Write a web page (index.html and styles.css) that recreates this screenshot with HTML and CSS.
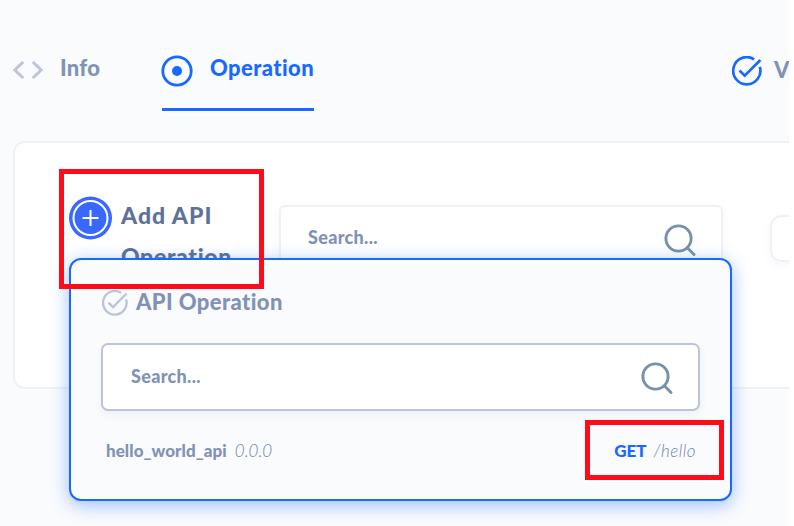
FILE: index.html
```html
<!DOCTYPE html>
<html lang="en">
<head>
<meta charset="utf-8">
<title>API Operation</title>
<link rel="stylesheet" href="styles.css">
</head>
<body>
<svg width="0" height="0" class="defs">
  <symbol id="search" viewBox="0 0 32 32"><circle cx="14.5" cy="14.5" r="12.6"/><path d="M23.5 24 30 30.5" stroke-linecap="round"/></symbol>
  <symbol id="check" viewBox="0 0 30 30"><path d="M22.1 3.3A13.6 13.6 0 1 0 27.8 10.8M7.5 14.5l5.2 5.2L28.4 4"/></symbol>
</svg>
<div class="app">
  <nav class="tabs">
    <a class="tab info"><svg class="code" viewBox="0 0 30 18"><path d="M10.200 1 1.800 9l8.400 8M19.800 1l8.400 8-8.400 8"/></svg><span class="t-info">Info</span></a>
    <a class="tab active"><svg class="target" viewBox="0 0 32 32"><circle cx="16" cy="16" r="14.2"/><circle class="dot" cx="16" cy="16" r="5"/></svg><span class="t-op">Operation</span></a>
    <a class="tab verify"><svg class="tick"><use href="#check"/></svg><span>V</span></a>
  </nav>
  <main class="card">
    <button class="add">
      <svg viewBox="0 0 44 44"><circle class="disc" cx="22.500" cy="22" r="21.500"/><circle class="ring" cx="22.500" cy="22" r="17"/><path d="M14.500 22h16M22.500 14v16"/></svg>
      <span><span class="t-add">Add API</span><br><span class="t-add2">Operation</span></span>
    </button>
    <div class="search outer"><span class="t-search">Search...</span><svg><use href="#search"/></svg></div>
    <div class="select"></div>
  </main>
  <section class="popover">
    <h2><svg><use href="#check"/></svg><span class="t-title">API Operation</span></h2>
    <div class="search inner"><span class="t-search">Search...</span><svg><use href="#search"/></svg></div>
    <div class="row"><b class="t-name">hello_world_api</b><i class="t-ver">0.0.0</i><b class="t-get">GET</b><i class="t-path">/hello</i></div>
  </section>
  <div class="mark mark-add"></div>
  <div class="mark mark-path"></div>
</div>
</body>
</html>
```
FILE: styles.css
```css
* { box-sizing: border-box; }
body { margin: 0; background: #fff; font-family: Lato, sans-serif; color: #8092b5; font-variant-ligatures: none; }
svg { display: block; flex: none; fill: none; stroke: currentColor; }
span, b, i { white-space: nowrap; }
.defs { position: absolute; }
.app { position: relative; width: 789px; height: 526px; overflow: hidden; background: #fafbfd; }
.tabs { display: flex; height: 141px; padding-top: 43px; font-size: 22px; font-weight: 900; }
.tab { display: flex; flex: none; height: 68px; line-height: 50px; }
.info { width: 149px; margin-left: 13px; }
.code { width: 30px; height: 18px; margin: 18px 17px 0 0; stroke-width: 3; color: #bac4dc; }
.active { width: 152px; color: #1769ff; border-bottom: 3px solid #1769ff; }
.target { width: 32px; height: 32px; margin: 12px 17px 0 -1px; stroke-width: 2.800; }
.dot { fill: currentColor; stroke: none; }
.verify { margin-left: 418px; line-height: 54px; }
.tick { width: 30px; height: 30px; margin: 13px 12px 0 0; color: #1769ff; stroke-width: 2.700; }
.t-info, .t-search { letter-spacing: .3px; }
.t-op, .t-title { letter-spacing: .4px; }

.card { display: flex; width: 900px; height: 248px; margin-left: 13px; padding: 53px 0 0 54px; background: #fff; border: 2px solid #f0f1f7; border-radius: 12px; }
.card > * { flex: none; }
.add { display: flex; width: 210px; height: 90px; padding: 0; border: 0; background: none; color: #5d7199; font: 900 23px/41px Lato, sans-serif; font-variant-ligatures: none; text-align: left; }
.add > span { margin-top: -1px; }
.add svg { width: 44px; height: 44px; margin: 0 9px 0 -1px; color: #fff; stroke-width: 2; }
.disc { fill: #3968ff; stroke: none; }
.t-add { letter-spacing: 1px; }
.t-add2 { letter-spacing: .65px; }
.search { display: flex; justify-content: space-between; background: #fff; font-size: 18px; font-weight: 900; }
.search svg { width: 32px; height: 32px; color: #7890ad; stroke-width: 2.900; }
.outer { width: 444px; height: 68px; margin-top: 9px; padding: 17px 25px 0 27px; border: 2px solid #f0f1f7; border-radius: 6px; line-height: 27px; box-shadow: 0 3px 10px rgba(60, 70, 130, .05); }
.select { width: 90px; height: 47px; margin: 19px 0 0 47px; border: 2px solid #f0f1f7; border-radius: 12px; box-shadow: 0 3px 8px rgba(60, 70, 130, .05); }

.popover { position: absolute; left: 69px; top: 258px; width: 663px; height: 243px; padding: 26px 31px 0; background: #fafbfd; border: 2px solid #1769ff; border-radius: 12px; box-shadow: 0 4px 18px rgba(23, 105, 255, .42); }
.popover h2 { display: flex; height: 34px; margin: 0; font-size: 22px; font-weight: 900; line-height: 32px; }
.popover h2 svg { width: 26px; height: 26px; margin: 4px 8px 0 0; color: #bac4dc; stroke-width: 2.700; }
.inner { height: 68px; margin: 23px -1px 0 -1px; padding: 17px 25px 0 28px; border: 2px solid #bac4dc; border-radius: 7px; line-height: 28px; box-shadow: 0 4px 8px rgba(60, 70, 130, .06); }
.row { display: flex; margin: 25px 0 0 4px; font-size: 17px; line-height: 30px; }
.row b { font-weight: 900; }
.row i { font-weight: 300; color: #7083a9; }
.t-name { letter-spacing: .06px; }
.t-ver { margin-left: 8px; }
.row .t-get { margin-left: auto; color: #1769ff; }
.t-path { margin: 0 3px 0 7px; letter-spacing: .5px; }

.mark { position: absolute; border: 5px solid #ff0c1c; }
.mark-add { left: 59px; top: 169px; width: 205px; height: 120px; }
.mark-path { left: 585px; top: 420px; width: 139px; height: 60px; }
```
